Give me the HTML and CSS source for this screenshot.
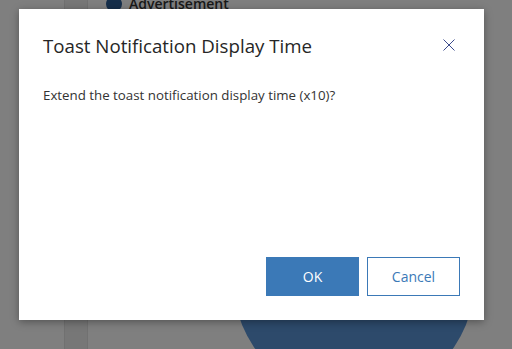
FILE: index.html
```html
<!DOCTYPE html>
<html>
<head>
<meta charset="utf-8">
<link rel="stylesheet" href="styles.css">
</head>
<body>
<div class="backdrop">
  <div class="strip"></div>
  <div class="ad"><span class="ad-dot"></span><span class="ad-text">Advertisement</span></div>
  <div class="circle"></div>
  <div class="overlay"></div>
</div>
<div class="dialog" role="dialog">
  <div class="dialog-head">
    <h1 class="title">Toast Notification Display Time</h1>
    <button class="close" aria-label="Close">
      <svg width="12" height="12" viewBox="0 0 12 12"><path d="M0.5 0.5 L11.5 11.5 M11.5 0.5 L0.5 11.5" stroke="#3b4a8c" stroke-width="1" fill="none"/></svg>
    </button>
  </div>
  <p class="message">Extend the toast notification display time (x10)?</p>
  <div class="actions">
    <button class="btn btn-primary">OK</button>
    <button class="btn btn-secondary">Cancel</button>
  </div>
</div>
</body>
</html>
```
FILE: styles.css
```css
html, body {
  margin: 0;
  padding: 0;
  width: 512px;
  height: 349px;
  overflow: hidden;
}
body {
  position: relative;
  background: #ffffff;
  font-family: "Open Sans", "Noto Sans", sans-serif;
}
.backdrop {
  position: absolute;
  inset: 0;
  overflow: hidden;
  background: #ffffff;
}
.strip {
  position: absolute;
  left: 64px;
  top: 0;
  width: 22px;
  height: 349px;
  background: #efefef;
  border-left: 1px solid #e2e2e2;
  border-right: 1px solid #e2e2e2;
}
.ad {
  position: absolute;
  left: 106px;
  top: 0;
  display: flex;
  align-items: center;
  gap: 7px;
  height: 8px;
}
.ad-dot {
  width: 16px;
  height: 16px;
  border-radius: 50%;
  background: #2b5c95;
}
.ad-text {
  font-size: 14px;
  line-height: 14px;
  font-weight: 600;
  color: #333;
}
.circle {
  position: absolute;
  left: 233px;
  top: 158px;
  width: 242px;
  height: 242px;
  border-radius: 50%;
  background: #5a94d6;
}
.overlay {
  position: absolute;
  inset: 0;
  background: rgba(0, 0, 0, 0.5);
}
.dialog {
  position: absolute;
  left: 19px;
  top: 9px;
  width: 465px;
  height: 311px;
  box-sizing: border-box;
  background: #fff;
  box-shadow: 0 2px 8px rgba(0, 0, 0, 0.35);
  display: flex;
  flex-direction: column;
  padding: 0 24px 24px 24px;
}
.dialog-head {
  display: flex;
  align-items: center;
  justify-content: space-between;
  height: 72px;
}
.title {
  margin: 0;
  font-size: 18.7px;
  font-weight: 400;
  color: #262626;
}
.close {
  border: 0;
  background: none;
  padding: 0;
  margin-right: 5px;
  width: 12px;
  height: 12px;
  display: flex;
}
.message {
  margin: 5px 0 0 0;
  font-size: 13.3px;
  color: #333;
  flex: 1;
}
.actions {
  display: flex;
  justify-content: flex-end;
  gap: 8px;
}
.btn {
  width: 93px;
  height: 39px;
  box-sizing: border-box;
  font-family: inherit;
  font-size: 14px;
  padding: 0;
}
.btn-primary {
  background: #3b79b7;
  color: #fff;
  border: 1px solid #3b79b7;
}
.btn-secondary {
  background: #fff;
  color: #3b79b7;
  border: 1px solid #3b79b7;
}
```
